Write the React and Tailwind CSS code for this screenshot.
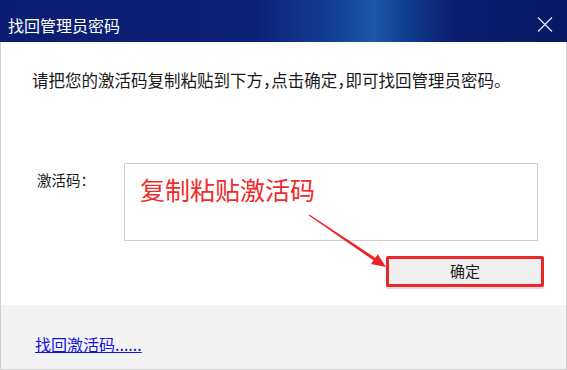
import React from "react";

// dialog: find admin password
export default function App() {
  return (
    <div className="w-[567px] h-[370px] flex flex-col overflow-hidden font-['Microsoft_YaHei','Noto_Sans_CJK_SC',sans-serif] text-[#1a1a1a]">
      {/* title bar */}
      <div className="h-[42px] shrink-0 flex items-center justify-between pl-[8px] pr-[14px] pt-[8px] bg-[linear-gradient(90deg,#0b1d70_0%,#0b2176_45%,#123e92_58%,#1a58a6_66%,#114090_71%,#0a1e6e_80%,#081865_100%)]">
        <span className="text-white text-[16px] leading-[22px]">找回管理员密码</span>
        <svg width="16" height="15" viewBox="0 0 16 15" className="mt-[-1px]">
          <path d="M1 0.5 L15 14.5 M15 0.5 L1 14.5" stroke="#dde4f2" strokeWidth="1.3" fill="none" />
        </svg>
      </div>

      {/* body */}
      <div className="relative flex-1 bg-white border-x border-[#d2d2d2]">
        <p className="pl-[31px] pt-[27px] text-[16.5px] leading-[22px] [font-feature-settings:'halt']">
          请把您的激活码复制粘贴到下方，点击确定，即可找回管理员密码。
        </p>

        <div className="flex mt-[72px] pl-[36px]">
          <div className="w-[87px] pt-[6px] text-[14.5px] leading-[22px]">激活码：</div>
          <div className="w-[414px] h-[78px] border border-[#cfcfcf] pl-[15px] pt-[10px]">
            <span className="text-[#ef2b2b] text-[25px] leading-[30px]">复制粘贴激活码</span>
          </div>
        </div>

        <div className="flex justify-end mt-[15px] pr-[22px]">
          <button className="w-[158px] h-[31px] border-[3px] border-[#e8272b] rounded-[2px] bg-[#efefef] shadow-[0_2px_0_#dcdcdc] text-[15px] leading-[22px] pb-[1px]">
            确定
          </button>
        </div>

        {/* red arrow */}
        <svg className="absolute left-0 top-0 pointer-events-none" width="567" height="263">
          <polygon points="308.3,172.5 374.9,216.2 373.1,218.8 307.7,173.5" fill="#ee2222" />
          <polygon points="385,225 370,222.1 376.8,212.2" fill="#ee2222" />
        </svg>
      </div>

      {/* footer */}
      <div className="h-[65px] shrink-0 bg-[#f3f3f3] border-x border-b border-[#d2d2d2] pl-[34px] pt-[27px]">
        <a href="#" className="text-[#1414dc] underline text-[16px] leading-[22px]">
          找回激活码......
        </a>
      </div>
    </div>
  );
}
